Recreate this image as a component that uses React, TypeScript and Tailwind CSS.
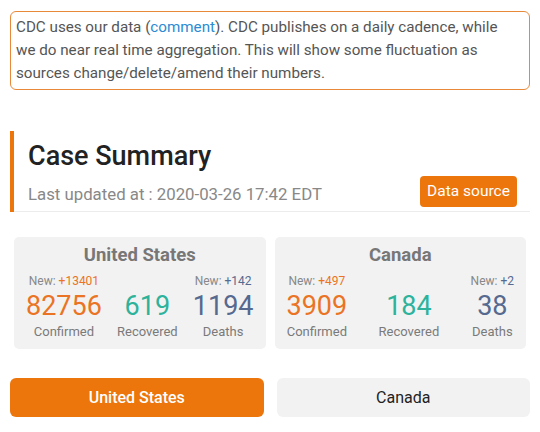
import React from 'react';

type Stat = {
  name: string;
  confirmed: number;
  recovered: number;
  deaths: number;
  newConfirmed: number;
  newDeaths: number;
};

const stats: Stat[] = [
  { name: 'United States', confirmed: 82756, recovered: 619, deaths: 1194, newConfirmed: 13401, newDeaths: 142 },
  { name: 'Canada', confirmed: 3909, recovered: 184, deaths: 38, newConfirmed: 497, newDeaths: 2 },
];

function StatCard({ s }: { s: Stat }) {
  return (
    <div className="bg-[#f2f2f2] rounded-[5px] pt-[6px] pb-[7px] px-[12px]">
      <div className="text-center text-[18.5px] font-bold text-[#777] leading-[24px]">{s.name}</div>
      <div className="flex justify-between mt-[5px]">
        <div className="flex flex-col items-center">
          <div className="text-[12px] text-[#888] leading-[18px]">
            New: <span className="text-[#ea7424]">+{s.newConfirmed}</span>
          </div>
          <div className="text-[27px] text-[#ea7424] leading-[32px]">{s.confirmed}</div>
          <div className="text-[13px] text-[#7a7a7a] leading-[20px]">Confirmed</div>
        </div>
        <div className="flex flex-col items-center">
          <div className="text-[12px] leading-[18px]">&nbsp;</div>
          <div className="text-[27px] text-[#2db29c] leading-[32px]">{s.recovered}</div>
          <div className="text-[13px] text-[#7a7a7a] leading-[20px]">Recovered</div>
        </div>
        <div className="flex flex-col items-center">
          <div className="text-[12px] text-[#888] leading-[18px]">
            New: <span className="text-[#56698f]">+{s.newDeaths}</span>
          </div>
          <div className="text-[27px] text-[#56698f] leading-[32px]">{s.deaths}</div>
          <div className="text-[13px] text-[#7a7a7a] leading-[20px]">Deaths</div>
        </div>
      </div>
    </div>
  );
}

export default function App() {
  return (
    <div className="w-[540px] h-[432px] bg-white px-[10px] pt-[11px] font-['Roboto',sans-serif] overflow-hidden">
      {/* CDC notice */}
      <div className="border-[1.5px] border-[#e8893a] rounded-[6px] px-[5px] py-[4px] text-[15.2px] leading-[23px] text-[#555]">
        CDC uses our data (<span className="text-[#2b8bd3]">comment</span>). CDC publishes on a daily cadence, while
        <br />
        we do near real time aggregation. This will show some fluctuation as
        <br />
        sources change/delete/amend their numbers.
      </div>

      {/* Case summary header */}
      <div className="mt-[41px] border-l-4 border-[#ec760c]">
        <div className="pl-[14px] border-b border-[#ececec] pb-[4px]">
          <h2 className="text-[27px] font-medium text-[#222] leading-[32px] pt-[9px]">Case Summary</h2>
          <div className="flex items-end justify-between mt-[4px]">
            <div className="text-[16.8px] text-[#888] leading-[22px] mb-[2px]">Last updated at : 2020-03-26 17:42 EDT</div>
            <button className="bg-[#ec760c] text-white text-[15.5px] rounded-[4px] w-[97px] h-[31px] mr-[13px]">
              Data source
            </button>
          </div>
        </div>
      </div>

      {/* Country cards */}
      <div className="grid grid-cols-2 gap-[9px] px-[4px] mt-[25px]">
        {stats.map((s) => (
          <StatCard key={s.name} s={s} />
        ))}
      </div>

      {/* Country tabs */}
      <div className="grid grid-cols-2 gap-[13px] mt-[29px]">
        <button className="bg-[#ec760c] text-white text-[16px] font-medium rounded-[6px] h-[39px]">United States</button>
        <button className="bg-[#f2f2f2] text-[#222] text-[16px] rounded-[6px] h-[39px]">Canada</button>
      </div>
    </div>
  );
}
